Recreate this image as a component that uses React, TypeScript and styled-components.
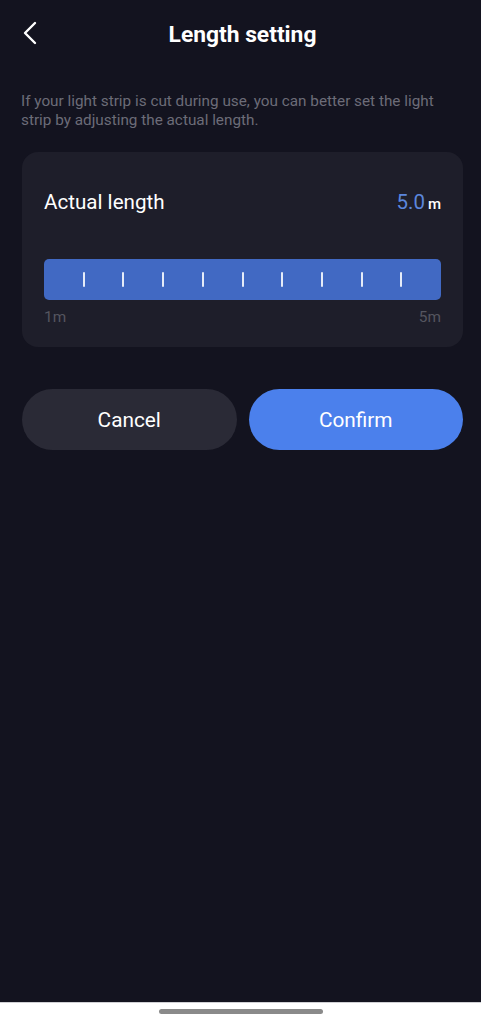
import React from "react";
import styled, { createGlobalStyle } from "styled-components";

const Global = createGlobalStyle`
  html, body { margin: 0; padding: 0; background: #13131f; }
  * { box-sizing: border-box; }
  body { font-family: Roboto, "Noto Sans", "Liberation Sans", sans-serif; }
`;

const Screen = styled.div`
  width: 481px;
  height: 1024px;
  display: flex;
  flex-direction: column;
  background: #13131f;
  color: #ffffff;
`;

const Main = styled.main`
  flex: 1;
  display: flex;
  flex-direction: column;
  padding: 0 18px 0 22px;
`;

const Header = styled.header`
  height: 68px;
  display: grid;
  grid-template-columns: 40px 1fr 40px;
  align-items: center;
  margin-left: -4px;
`;

const BackButton = styled.button`
  width: 24px;
  height: 30px;
  padding: 0;
  border: 0;
  background: none;
  display: flex;
  align-items: center;
  justify-content: center;
  margin-top: -3px;
`;

const Title = styled.h1`
  margin: 0;
  text-align: center;
  font-size: 22.8px;
  font-weight: 700;
  color: #ffffff;
  padding-left: 4px;
`;

const Description = styled.p`
  margin: 24px 0 0 -1px;
  font-size: 15.3px;
  line-height: 19px;
  color: #6c6c78;
`;

const Card = styled.section`
  margin-top: 22px;
  background: #1e1e2a;
  border-radius: 16px;
  padding: 38px 22px 21px;
  display: flex;
  flex-direction: column;
`;

const Row = styled.div`
  display: flex;
  justify-content: space-between;
  align-items: baseline;
  height: 24px;
`;

const Label = styled.span`
  font-size: 20.6px;
  line-height: 24px;
  color: #ffffff;
`;

const Value = styled.span`
  font-size: 20.5px;
  line-height: 24px;
  color: #5b86dc;
`;

const Unit = styled.span`
  font-size: 15px;
  font-weight: 500;
  color: #ffffff;
  margin-left: 3px;
`;

const Track = styled.div`
  margin-top: 45px;
  height: 41px;
  border-radius: 5px;
  background: #4169c3;
  display: grid;
  grid-template-columns: repeat(10, 1fr);
  align-items: center;
`;

const Tick = styled.span`
  justify-self: end;
  width: 2px;
  height: 15px;
  margin-right: -1px;
  border-radius: 1px;
  background: #e6ecf8;
`;

const Range = styled.div`
  margin-top: 8px;
  display: flex;
  justify-content: space-between;
  font-size: 15.4px;
  line-height: 18px;
  color: #55555f;
`;

const Actions = styled.div`
  margin-top: 42px;
  display: grid;
  grid-template-columns: 1fr 1fr;
  gap: 12px;
`;

const ActionButton = styled.button<{ $primary?: boolean }>`
  height: 61px;
  border: 0;
  border-radius: 31px;
  font-family: inherit;
  font-size: 20.8px;
  color: #ffffff;
  background: ${(p) => (p.$primary ? "#4b80ec" : "#2a2a36")};
`;

const NavBar = styled.div`
  height: 22px;
  background: #ffffff;
  border-top: 1px solid #d0d0d4;
  display: flex;
  justify-content: center;
  padding-top: 6px;
`;

const Handle = styled.div`
  width: 164px;
  height: 5px;
  border-radius: 3px;
  background: #8a8a8a;
`;

export default function App() {
  return (
    <Screen>
      <Global />
      <Main>
        <Header>
          <BackButton aria-label="Back">
            <svg width="16" height="24" viewBox="0 0 16 24" fill="none">
              <path
                d="M13 2 L3 12 L13 22"
                stroke="#ffffff"
                strokeWidth="2.4"
                strokeLinecap="round"
                strokeLinejoin="round"
              />
            </svg>
          </BackButton>
          <Title>Length setting</Title>
          <span />
        </Header>
        <Description>
          If your light strip is cut during use, you can better set the light
          strip by adjusting the actual length.
        </Description>
        <Card>
          <Row>
            <Label>Actual length</Label>
            <span>
              <Value>5.0</Value>
              <Unit>m</Unit>
            </span>
          </Row>
          <Track>
            {Array.from({ length: 9 }).map((_, i) => (
              <Tick key={i} />
            ))}
          </Track>
          <Range>
            <span>1m</span>
            <span>5m</span>
          </Range>
        </Card>
        <Actions>
          <ActionButton>Cancel</ActionButton>
          <ActionButton $primary>Confirm</ActionButton>
        </Actions>
      </Main>
      <NavBar>
        <Handle />
      </NavBar>
    </Screen>
  );
}
